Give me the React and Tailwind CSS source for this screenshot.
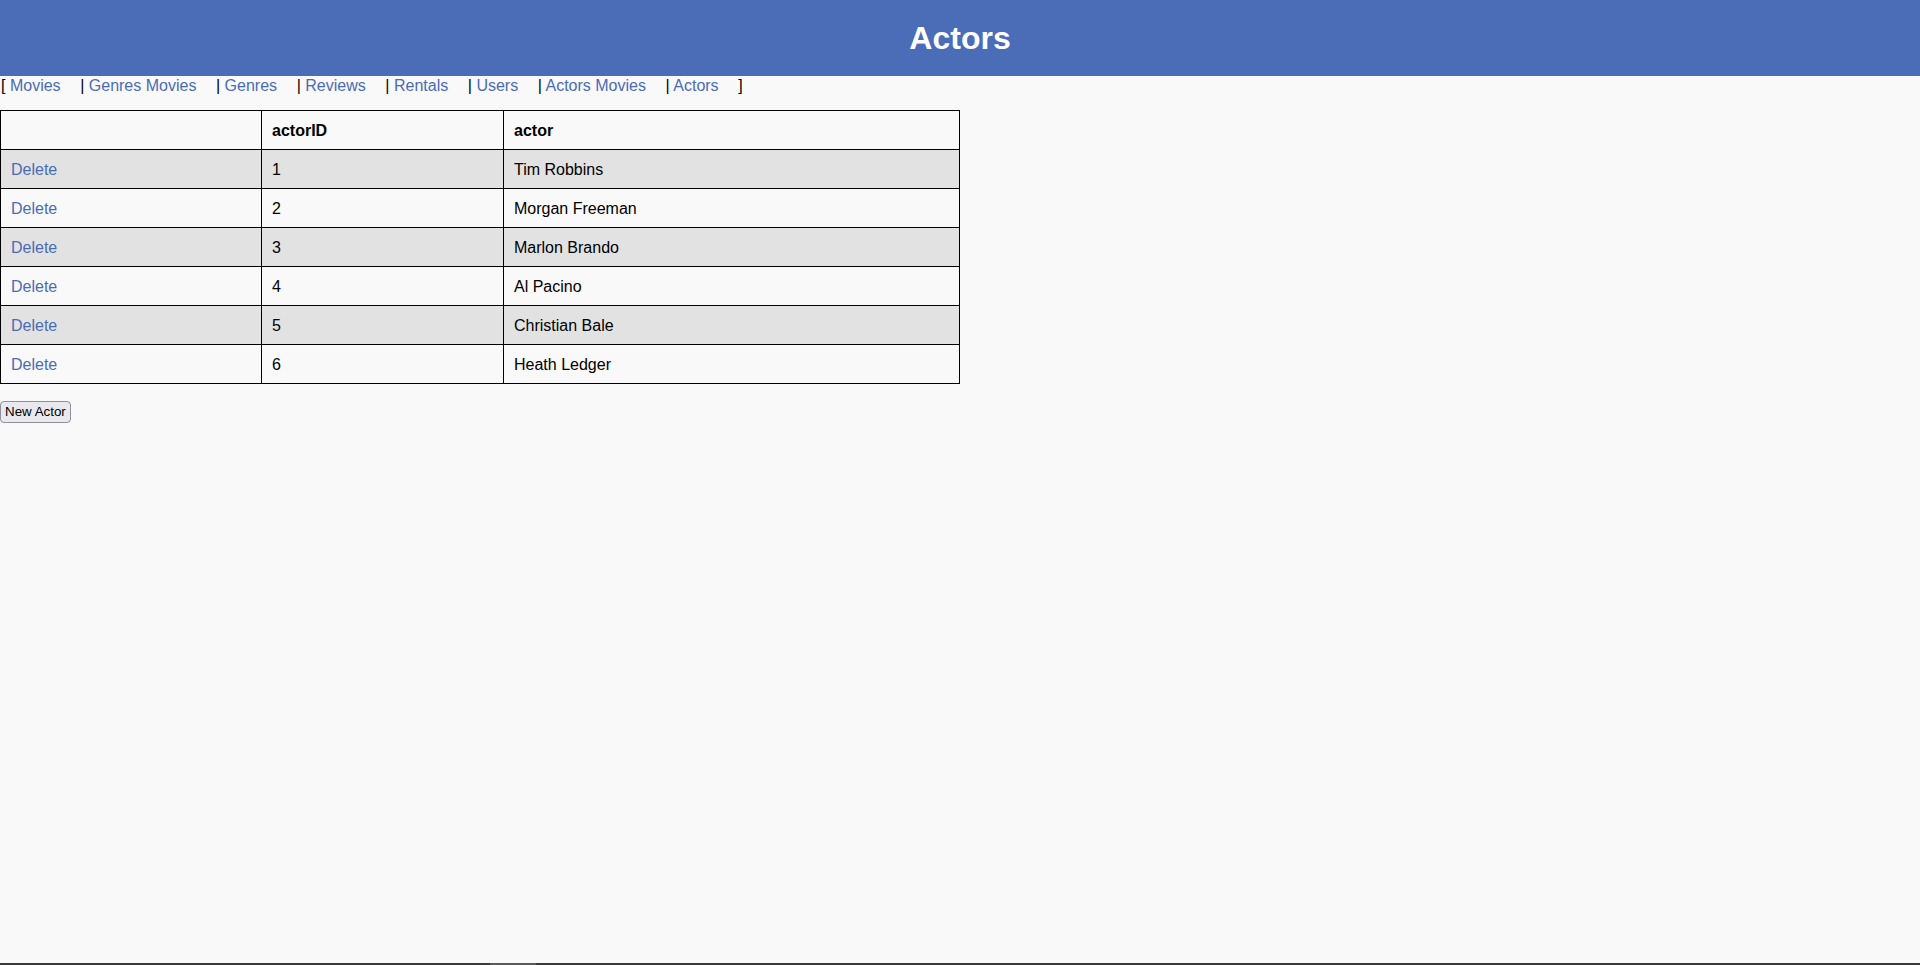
import React from 'react';

const links = ['Movies', 'Genres Movies', 'Genres', 'Reviews', 'Rentals', 'Users', 'Actors Movies', 'Actors'];

const actors = [
    { id: 1, name: 'Tim Robbins' },
    { id: 2, name: 'Morgan Freeman' },
    { id: 3, name: 'Marlon Brando' },
    { id: 4, name: 'Al Pacino' },
    { id: 5, name: 'Christian Bale' },
    { id: 6, name: 'Heath Ledger' },
];

const App = () => {
    return (
        <div className="flex flex-col h-[965px] bg-[#f9f9f9] text-black text-[16px] font-['Liberation_Sans',Arial,sans-serif]">
            <header className="h-[76px] bg-[#4b6cb7] flex items-center justify-center">
                <h1 className="text-[32px] font-bold text-white leading-none">Actors</h1>
            </header>

            <div className="flex-1">
                <nav className="leading-[20px] whitespace-pre pl-px">
                    <span>[</span>
                    {links.map((l, i) => (
                        <span key={l}>
                            {i > 0 && <span className="ml-[19.6px]">|</span>}
                            {' '}
                            <a className="text-[#4a6cb7] cursor-pointer">{l}</a>
                        </span>
                    ))}
                    <span className="ml-[19.6px]">]</span>
                </nav>

                <table className="mt-[14px] w-[960px] border-collapse table-fixed">
                    <colgroup>
                        <col className="w-[261px]" />
                        <col className="w-[242px]" />
                        <col />
                    </colgroup>
                    <thead>
                        <tr>
                            <th className="border border-black px-[10px] pt-[11px] pb-[9px] text-left font-bold leading-[18px]"></th>
                            <th className="border border-black px-[10px] pt-[11px] pb-[9px] text-left font-bold leading-[18px]">actorID</th>
                            <th className="border border-black px-[10px] pt-[11px] pb-[9px] text-left font-bold leading-[18px]">actor</th>
                        </tr>
                    </thead>
                    <tbody>
                        {actors.map((a, i) => (
                            <tr key={a.id} className={i % 2 === 0 ? 'bg-[#e2e2e2]' : ''}>
                                <td className="border border-black px-[10px] pt-[11px] pb-[9px] leading-[18px]">
                                    <a className="text-[#4a6cb7] cursor-pointer">Delete</a>
                                </td>
                                <td className="border border-black px-[10px] pt-[11px] pb-[9px] leading-[18px]">{a.id}</td>
                                <td className="border border-black px-[10px] pt-[11px] pb-[9px] leading-[18px]">{a.name}</td>
                            </tr>
                        ))}
                    </tbody>
                </table>

                <button className="mt-[17px] block h-[22px] px-[4px] text-[13.33px] leading-none border border-[#8f8f9d] rounded-[4px] bg-[#e9e9ed]">
                    New Actor
                </button>
            </div>

            <div className="h-[2px] bg-[#3a3a3a] flex">
                <div className="ml-[490px] w-[46px] bg-[#5a5a5a]"></div>
            </div>
        </div>
    );
};

export default App;
